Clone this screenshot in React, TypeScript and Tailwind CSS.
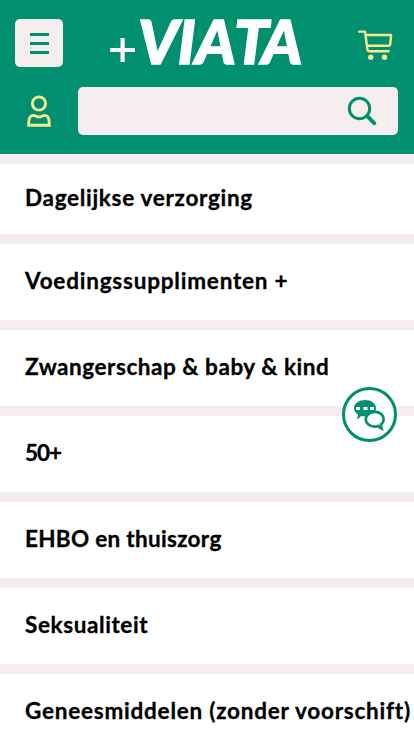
const rows = [
  { label: 'Dagelijkse verzorging', style: 'h-[70px] tracking-[0.7px]' },
  { label: 'Voedingssupplimenten +', style: 'h-[76px] tracking-[0.79px]' },
  { label: 'Zwangerschap & baby & kind', style: 'h-[76px] tracking-[0.54px]' },
  { label: '50+', style: 'h-[76px] tracking-[-1px]' },
  { label: 'EHBO en thuiszorg', style: 'h-[76px] tracking-[0.3px]' },
  { label: 'Seksualiteit', style: 'h-[76px] tracking-[0.6px]' },
  { label: 'Geneesmiddelen (zonder voorschift)', style: 'h-[76px] tracking-[0.77px]' },
];

function Logo() {
  return (
    <svg width="200" height="80" viewBox="0 0 200 80" className="ml-[46px] shrink-0" aria-label="+VIATA">
      <path d="M1.2 47H26M13.6 35v24" stroke="#fff" strokeWidth="4.2" fill="none" />
      <text transform="scale(1.03 1)" x="28.2 66.7 83.7 121.4 148.3" y="61.5" fill="#fff" stroke="#fff" strokeWidth="1.5" fontSize="60" fontWeight="900" fontStyle="italic" fontFamily="Lato, sans-serif">VIATA</text>
    </svg>
  );
}

function CartIcon() {
  return (
    <svg width="36" height="32" viewBox="0 0 36 32" fill="none" stroke="#f9ec8e" className="relative top-[2px] ml-[48px] shrink-0">
      <path d="M2 2.6H8L10.4 20.3Q10.7 22.2 12.5 22.2H31.7M8.6 6H34.1L33.2 15.2Q33 16.8 31.3 16.8H10" strokeWidth="2.4" strokeLinejoin="round" strokeLinecap="round" />
      <circle cx="13.8" cy="28.2" r="2.7" fill="#f9ec8e" stroke="none" />
      <circle cx="27.5" cy="28.2" r="2.7" fill="#f9ec8e" stroke="none" />
    </svg>
  );
}

function UserIcon() {
  return (
    <svg width="26" height="34" viewBox="0 0 26 34" fill="none" stroke="#f9ec8e" strokeWidth="2.9">
      <circle cx="13" cy="9.5" r="6.6" />
      <path d="M2.6 31.3C2.6 26 3.2 21.4 7 21.4C10 21.4 10.4 23 13 23S16 21.4 19 21.4C22.8 21.4 23.4 26 23.4 31.3Z" />
    </svg>
  );
}

function ChatButton() {
  return (
    <button className="fixed left-[342px] top-[387px] flex size-[55px] items-center justify-center rounded-full border-3 border-[#009070] bg-white" aria-label="Chat">
      <svg width="49" height="49" viewBox="0 0 49 49" fill="none">
        <path d="M20.2 10C26 10 31 13.4 31 18S26 26.4 20.2 26.4C18.8 26.4 17.4 26.2 16.2 25.9C15 27.3 13.2 28.8 11.6 29.3C12.4 27.8 13 26 12.9 24.4C10.6 23 9 20.7 9 18C9 13.4 14.3 10 20.2 10Z" fill="#009070" />
        <path d="M11 17h4v3h-4zM18.5 17h4v3h-4zM25 17h4v3h-4z" fill="#fff" />
        <path d="M29.8 21.8C24.8 21.8 20.8 25 20.8 29.2S25 36.6 30 36.6C31.3 36.6 32.2 36.4 33.2 36C34.2 37.1 35 38 36.5 38.6C36 37.2 35.8 36 36 34.4C37.6 33.2 38.6 31.4 38.6 29.2C38.6 25 35 21.8 29.8 21.8Z" fill="#fff" stroke="#009070" strokeWidth="2.7" />
      </svg>
    </button>
  );
}

export default function App() {
  return (
    <div className="h-[736px] w-[414px] overflow-hidden bg-[#f6edee] font-['Lato',sans-serif] text-black">
      <header className="h-[154px] bg-[#009070] pt-[19px]">
        <div className="flex h-12 items-center pl-[15px]">
          <button className="flex size-12 shrink-0 flex-col items-center justify-center gap-[6px] rounded-[5px] bg-[#f6edee]" aria-label="Menu">
            <span className="h-[3px] w-[19px] bg-[#009070]" />
            <span className="h-[3px] w-[19px] bg-[#009070]" />
            <span className="h-[3px] w-[19px] bg-[#009070]" />
          </button>
          <Logo />
          <CartIcon />
        </div>
        <div className="mt-5 flex h-12 items-center pl-[26px]">
          <UserIcon />
          <div className="ml-[26px] flex h-12 w-[320px] items-center justify-end rounded-[5px] bg-[#f6edee] pr-[21px]">
            <svg width="30" height="30" viewBox="0 0 30 30" fill="none" stroke="#009070">
              <circle cx="12.5" cy="12.5" r="10.2" strokeWidth="3" />
              <path d="M20.2 20.2L27.2 27.2" strokeWidth="4" strokeLinecap="round" />
            </svg>
          </div>
        </div>
      </header>
      <nav className="flex flex-col gap-[10px] pt-[10px]">
        {rows.map((row) => (
          <a key={row.label} className={`flex shrink-0 items-center whitespace-nowrap bg-white pb-[3px] pl-[25px] text-[22.5px] font-bold leading-[28px] [-webkit-text-stroke:0.3px_#000] ${row.style}`}>
            {row.label}
          </a>
        ))}
      </nav>
      <ChatButton />
    </div>
  );
}
